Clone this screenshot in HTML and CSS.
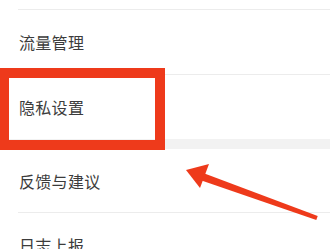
FILE: index.html
```html
<!DOCTYPE html>
<html lang="zh">
<head>
<meta charset="utf-8">
<link rel="stylesheet" href="styles.css">
</head>
<body>
<div class="page">
  <div class="group first">
    <div class="row divided">流量管理</div>
    <div class="row divided">隐私设置</div>
  </div>
  <div class="gap"></div>
  <div class="group">
    <div class="row short">反馈与建议</div>
    <div class="row divided">日志上报</div>
  </div>
  <div class="highlight"></div>
  <svg class="arrow" width="330" height="249" viewBox="0 0 330 249">
    <polygon points="186,170 209,164 200,188" fill="#ee3a1b"/>
    <polygon points="201.5,180.5 204.5,173.5 317.7,216.1 316.3,219.9" fill="#ee3a1b"/>
  </svg>
</div>
</body>
</html>
```
FILE: styles.css
```css
html, body {
  margin: 0;
  padding: 0;
  background: #ffffff;
}
.page {
  position: relative;
  width: 330px;
  height: 249px;
  overflow: hidden;
  font-family: "Noto Sans CJK SC", "Noto Sans", sans-serif;
  color: #3c3c3c;
}
.group.first {
  padding-top: 9px;
}
.row {
  margin-left: 18px;
  padding-left: 1px;
  height: 64px;
  display: flex;
  align-items: center;
  font-size: 16px;
  letter-spacing: 0.3px;
}
.row.divided {
  border-top: 1px solid #ececec;
}
.row.short {
  height: 63px;
}
.gap {
  height: 10px;
  background: #f2f2f2;
}
.highlight {
  position: absolute;
  left: -1px;
  top: 68px;
  width: 146px;
  height: 62px;
  border: 10px solid #ee3a1b;
}
.arrow {
  position: absolute;
  left: 0;
  top: 0;
}
```
